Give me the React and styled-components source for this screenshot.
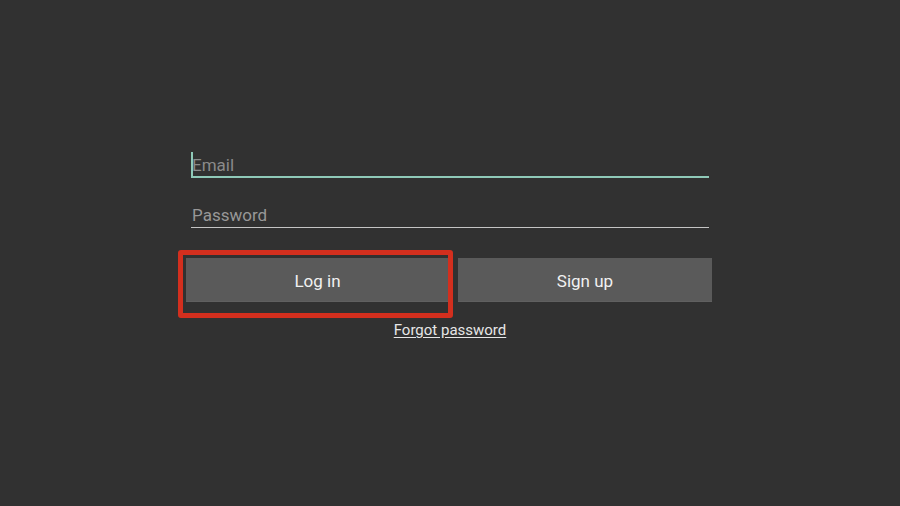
import React from 'react';
import styled, { createGlobalStyle } from 'styled-components';

const GlobalStyle = createGlobalStyle`
  html, body {
    margin: 0;
    padding: 0;
    background: #313131;
  }
  body {
    font-family: Roboto, "Noto Sans", "Liberation Sans", sans-serif;
  }
`;

const Screen = styled.div`
  width: 900px;
  height: 506px;
  background: #313131;
  overflow: hidden;
`;

const Form = styled.div`
  width: 518px;
  margin-left: 191px;
  padding-top: 152px;
  display: flex;
  flex-direction: column;
`;

const Field = styled.div`
  position: relative;
  margin-top: ${(p) => (p.$active ? '0' : '24px')};
  padding: 3px 0 ${(p) => (p.$active ? '1px' : '2px')} 1px;
  border-bottom: ${(p) => (p.$active ? '2px solid #8fc9b8' : '1px solid #c4c4c4')};
  font-size: 17px;
  line-height: 20px;
  color: ${(p) => (p.$active ? '#8a8a8a' : '#989898')};
`;

const Caret = styled.span`
  position: absolute;
  left: 0;
  top: 0;
  width: 2px;
  height: 24px;
  background: #8fc9b8;
`;

const ButtonRow = styled.div`
  display: grid;
  grid-template-columns: 263px 254px;
  column-gap: 9px;
  margin: 30px -3px 0 -5px;
`;

const ButtonWrap = styled.div`
  position: relative;
`;

const Button = styled.button`
  width: 100%;
  height: 44px;
  border: none;
  border-radius: 0;
  background: #5a5a5a;
  color: #f1f1f1;
  font-family: Roboto, "Noto Sans", sans-serif;
  font-size: 17px;
  padding: 2px 0 0;
  box-shadow: inset 0 -1px 0 #606060;
`;

const Highlight = styled.div`
  position: absolute;
  left: -8px;
  top: -8px;
  right: -4px;
  bottom: -16px;
  border: 5px solid #d32f1e;
  border-radius: 3px;
  pointer-events: none;
`;

const Forgot = styled.a`
  align-self: center;
  margin-top: 20px;
  font-size: 15px;
  line-height: 16px;
  color: #e6e6e6;
  text-decoration: underline;
  text-underline-offset: 2px;
`;

export default function App() {
  return (
    <Screen>
      <GlobalStyle />
      <Form>
        <Field $active>
          <Caret />
          Email
        </Field>
        <Field>Password</Field>
        <ButtonRow>
          <ButtonWrap>
            <Button>Log in</Button>
            <Highlight />
          </ButtonWrap>
          <ButtonWrap>
            <Button>Sign up</Button>
          </ButtonWrap>
        </ButtonRow>
        <Forgot>Forgot password</Forgot>
      </Form>
    </Screen>
  );
}
